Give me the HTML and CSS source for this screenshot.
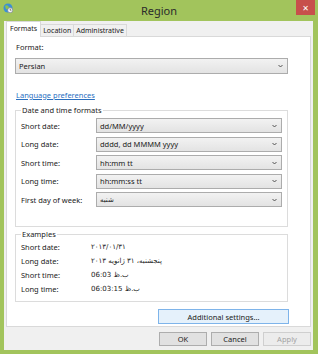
FILE: index.html
```html
<!DOCTYPE html>
<html lang="en">
<head>
    <meta charset="UTF-8">
    <title>Region</title>
    <link rel="stylesheet" href="styles.css">
</head>
<body>
    <div class="window">
        <div class="titlebar">
            <div class="app-icon">
                <svg width="10" height="10" viewBox="0 0 10 10">
                    <circle cx="5" cy="5" r="4.5" fill="#3b8fd6"/>
                    <path d="M2 3 Q4 1.5 5 3 T7 5 Q5 7 3 6 Z" fill="#8cc152"/>
                    <circle cx="7.2" cy="7.2" r="2.6" fill="#f4f4f4" stroke="#5a6a7a" stroke-width="0.6"/>
                    <path d="M7.2 5.6 V7.2 H8.4" stroke="#333" stroke-width="0.6" fill="none"/>
                </svg>
            </div>
            <div class="title">Region</div>
            <div class="close">&#x2715;</div>
        </div>
        <div class="client">
            <div class="tabs">
                <div class="tab selected">Formats</div>
                <div class="tab">Location</div>
                <div class="tab">Administrative</div>
            </div>
            <div class="panel">
                <div class="label-top">Format:</div>
                <div class="combo wide"><span>Persian</span><svg class="chev" width="5" height="4" viewBox="0 0 5 4"><polyline points="0.5,1 2.5,3 4.5,1" fill="none" stroke="#444" stroke-width="0.9"/></svg></div>
                <a class="link" href="#">Language preferences</a>

                <fieldset class="group formats">
                    <legend>Date and time formats</legend>
                    <div class="row">
                        <span class="lbl">Short date:</span>
                        <div class="combo"><span>dd/MM/yyyy</span><svg class="chev" width="5" height="4" viewBox="0 0 5 4"><polyline points="0.5,1 2.5,3 4.5,1" fill="none" stroke="#444" stroke-width="0.9"/></svg></div>
                    </div>
                    <div class="row">
                        <span class="lbl">Long date:</span>
                        <div class="combo"><span>dddd, dd MMMM yyyy</span><svg class="chev" width="5" height="4" viewBox="0 0 5 4"><polyline points="0.5,1 2.5,3 4.5,1" fill="none" stroke="#444" stroke-width="0.9"/></svg></div>
                    </div>
                    <div class="row">
                        <span class="lbl">Short time:</span>
                        <div class="combo"><span>hh:mm tt</span><svg class="chev" width="5" height="4" viewBox="0 0 5 4"><polyline points="0.5,1 2.5,3 4.5,1" fill="none" stroke="#444" stroke-width="0.9"/></svg></div>
                    </div>
                    <div class="row">
                        <span class="lbl">Long time:</span>
                        <div class="combo"><span>hh:mm:ss tt</span><svg class="chev" width="5" height="4" viewBox="0 0 5 4"><polyline points="0.5,1 2.5,3 4.5,1" fill="none" stroke="#444" stroke-width="0.9"/></svg></div>
                    </div>
                    <div class="row">
                        <span class="lbl">First day of week:</span>
                        <div class="combo"><span class="ar">شنبه</span><svg class="chev" width="5" height="4" viewBox="0 0 5 4"><polyline points="0.5,1 2.5,3 4.5,1" fill="none" stroke="#444" stroke-width="0.9"/></svg></div>
                    </div>
                </fieldset>

                <fieldset class="group examples">
                    <legend>Examples</legend>
                    <div class="ex-row">
                        <span class="lbl">Short date:</span>
                        <span class="val ar">٢٠١٣/٠١/٣١</span>
                    </div>
                    <div class="ex-row">
                        <span class="lbl">Long date:</span>
                        <span class="val ar">پنجشنبه، ٣١ ژانويه ٢٠١٣</span>
                    </div>
                    <div class="ex-row">
                        <span class="lbl">Short time:</span>
                        <span class="val ar">06:03 ب.ظ</span>
                    </div>
                    <div class="ex-row">
                        <span class="lbl">Long time:</span>
                        <span class="val ar">06:03:15 ب.ظ</span>
                    </div>
                </fieldset>

                <div class="more">
                    <button class="btn default">Additional settings...</button>
                </div>
            </div>
            <div class="buttons">
                <button class="btn">OK</button>
                <button class="btn">Cancel</button>
                <button class="btn disabled">Apply</button>
            </div>
        </div>
    </div>
</body>
</html>
```

FILE: styles.css
```css
body {
    margin: 0;
    padding: 0;
    background: #fff;
    font-family: "Noto Sans", "DejaVu Sans", sans-serif;
    font-size: 7.5px;
    color: #1a1a1a;
}

.window {
    width: 318px;
    height: 354px;
    background: #a2c45c;
    display: flex;
    flex-direction: column;
}

.titlebar {
    height: 21px;
    display: grid;
    grid-template-columns: 1fr auto 1fr;
    align-items: start;
}
.app-icon {
    padding: 3px 0 0 3px;
}
.title {
    font-size: 11px;
    color: #2b2b2b;
    line-height: 21px;
}
.close {
    justify-self: end;
    margin-right: 3px;
    width: 19px;
    height: 15px;
    background: #c7504b;
    color: #fff;
    font-size: 8px;
    line-height: 15px;
    text-align: center;
}

.client {
    flex: 1;
    margin: 0 5px 4px 4px;
    background: #f0f0f0;
    display: flex;
    flex-direction: column;
}

.tabs {
    display: flex;
    align-items: flex-end;
    height: 16px;
    padding-left: 2px;
    margin-bottom: -1px;
    font-size: 7px;
}
.tab {
    height: 13px;
    line-height: 12px;
    padding: 0 2px;
    border: 1px solid #d9d9d9;
    border-bottom: none;
    border-left: none;
    background: #f0f0f0;
    box-sizing: border-box;
}
.tab.selected {
    height: 16px;
    line-height: 14px;
    padding: 0 3px;
    border-left: 1px solid #d9d9d9;
    background: #fff;
    position: relative;
    z-index: 1;
}

.panel {
    margin: 0 2px;
    height: 291px;
    box-sizing: border-box;
    border: 1px solid #d9d9d9;
    background: #fff;
    padding: 5px 22px 0 8px;
    display: flex;
    flex-direction: column;
}

.label-top {
    padding-left: 1px;
    line-height: 11px;
}

.combo {
    height: 15px;
    box-sizing: border-box;
    border: 1px solid #acacac;
    background: linear-gradient(#f2f2f2, #e3e3e3);
    display: flex;
    align-items: center;
    justify-content: space-between;
    padding: 0 4px 0 3px;
}
.combo.wide {
    margin-top: 5px;
    height: 16px;
}

.link {
    margin-top: 16px;
    padding-left: 1px;
    color: #2a6fbf;
    line-height: 11px;
    align-self: flex-start;
}

.group {
    margin: 4px 0 0;
    border: 1px solid #dcdcdc;
    padding: 2px 5px 19px 5px;
    min-width: 0;
}
.group legend {
    padding: 0 1px;
    margin-left: 0;
    line-height: 11px;
}
.formats {
    display: flex;
    flex-direction: column;
    gap: 3.5px;
}
.row {
    display: flex;
    align-items: center;
}
.row .combo {
    flex: 1;
}
.lbl {
    width: 75px;
    flex-shrink: 0;
}

.examples {
    margin-top: 2px;
    padding: 0 5px 5px 5px;
}
.ex-row {
    display: flex;
    line-height: 14px;
    height: 14px;
}
.ex-row .lbl {
    width: 70px;
}
.ar {
    font-family: "DejaVu Sans", sans-serif;
    font-size: 7px;
}

.more {
    margin-top: 7px;
    display: flex;
    justify-content: flex-end;
    margin-right: -1px;
}

.btn {
    font-family: "Noto Sans", sans-serif;
    font-size: 7.5px;
    height: 14px;
    width: 48px;
    padding: 0;
    border: 1px solid #adadad;
    background: #e1e1e1;
    color: #1a1a1a;
}
.btn.default {
    width: 131px;
    height: 15px;
    border-color: #7eb4ea;
    background: #e5f1fb;
}
.btn.disabled {
    color: #a3a3a3;
    border-color: #cfcfcf;
    background: #ececec;
}

.buttons {
    margin-top: 5px;
    display: flex;
    justify-content: flex-end;
    gap: 4px;
    padding-right: 2px;
}
```
